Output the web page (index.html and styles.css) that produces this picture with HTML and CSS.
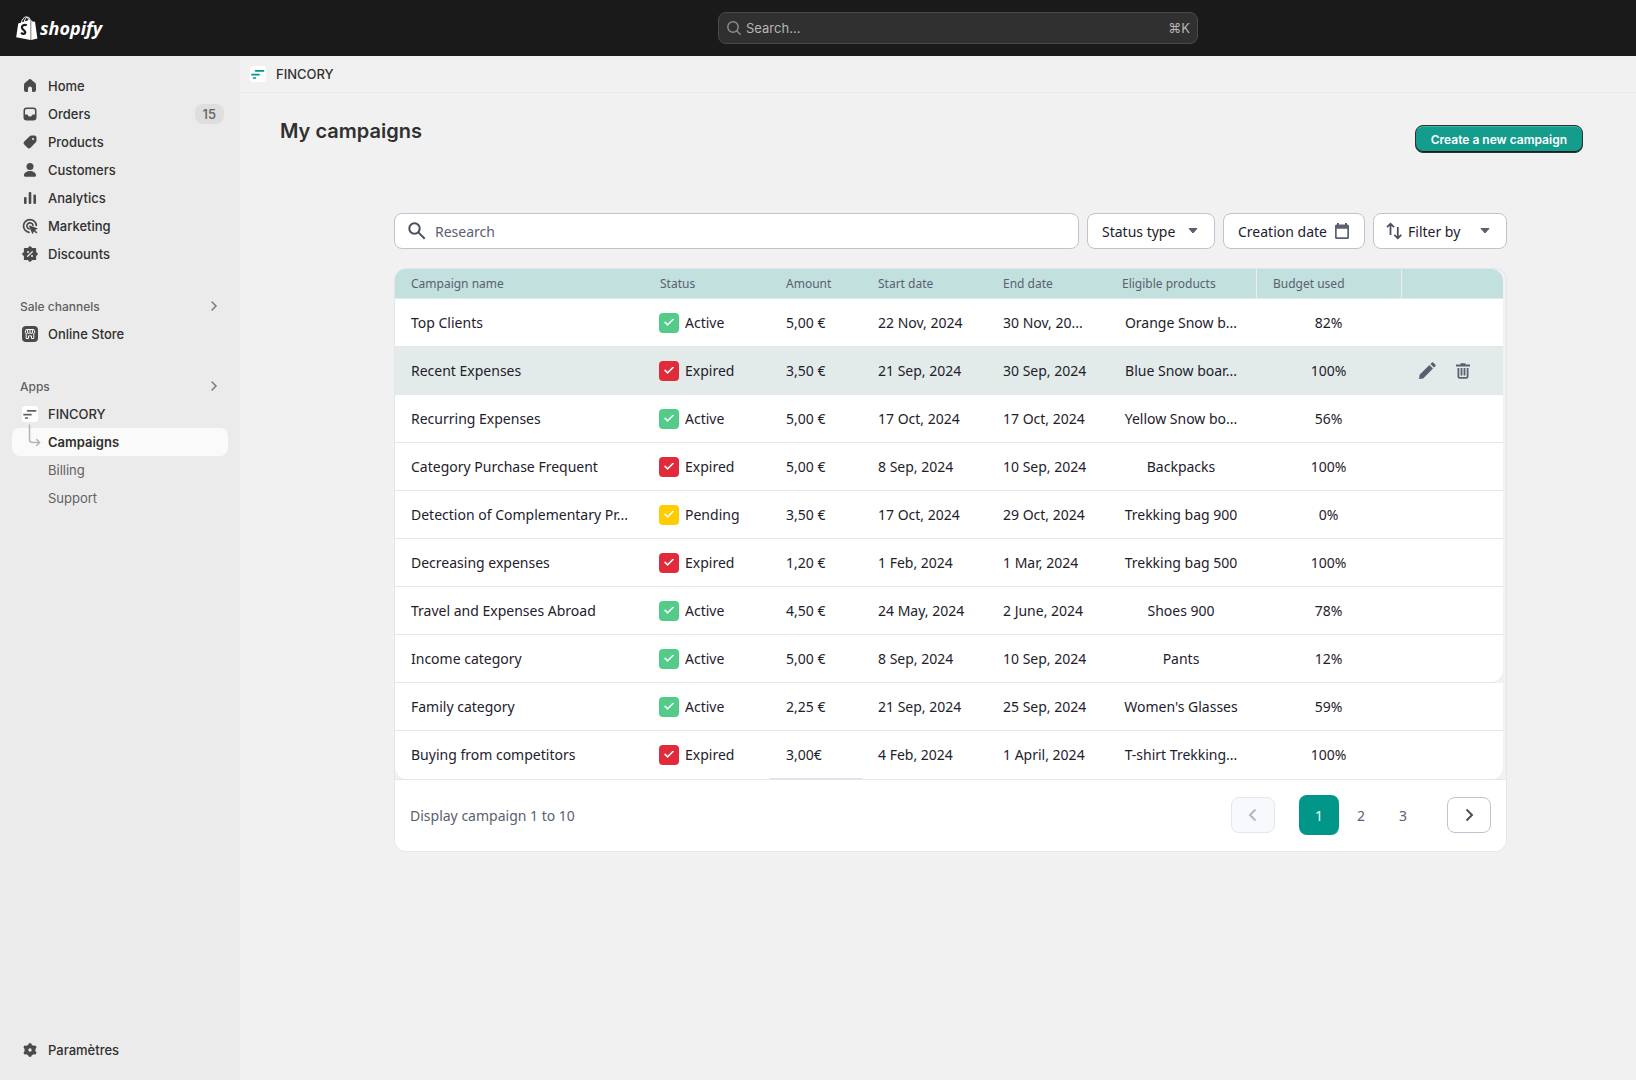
FILE: index.html
```html
<!DOCTYPE html>
<html lang="en">
<head>
    <meta charset="UTF-8">
    <meta name="viewport" content="width=device-width, initial-scale=1">
    <title>My campaigns</title>
    <link rel="stylesheet" href="styles.css">
</head>
<body>
    <header class="topbar">
        <a href="#" class="logo">
            <svg width="22" height="24" viewBox="0 0 22 24">
                <path d="M2.200 7.400 14.600 3.600 14.600 24 .2 21.300z" fill="#fff"/>
                <path d="M15.200 4.100 16.600 5.400 19 5.700 21.400 22.400 15.200 24z" fill="#fff"/>
                <path d="M5.400 7c.5-3.400 2.300-5.800 4.400-6.100 1.600-.2 2.700 1.500 2.900 4.200M8.200 6c.6-3 2-5 3.700-4.900 1.200.1 1.900 1.300 2.200 3.300" fill="none" stroke="#fff" stroke-width="1"/>
                <path d="M10.800 9.300c-2.600-1.200-4.900.1-4.900 2.200 0 2.500 3.600 2.600 3.400 4.900-.1 1.800-2.400 1.900-4.300.4" fill="none" stroke="#1a1a1a" stroke-width="2.200"/>
            </svg>
            <span>shopify</span>
        </a>
        <label class="top-search">
            <svg width="16" height="16" viewBox="0 0 16 16" fill="none" stroke="#8a8a8a" stroke-width="1.500" stroke-linecap="round">
                <circle cx="7" cy="7" r="5.200"/>
                <path d="m11 11 3.200 3.200"/>
            </svg>
            <input type="text" placeholder="Search..." aria-label="Search">
            <kbd>⌘K</kbd>
        </label>
    </header>

    <div class="layout">
        <aside class="sidebar">
            <nav>
                <a href="#" class="item">
                    <svg class="icon" viewBox="0 0 20 20"><path d="M8.300 3.900a2.500 2.500 0 0 1 3.400 0l3.500 3.200c.5.5.8 1.100.8 1.800V14a2 2 0 0 1-2 2h-1.200c-.5 0-.8-.3-.8-.8v-2.700a2 2 0 0 0-4 0v2.700c0 .5-.3.8-.8.8H6a2 2 0 0 1-2-2V8.900c0-.7.3-1.300.8-1.800z"/></svg>
                    Home
                </a>
                <a href="#" class="item">
                    <svg class="icon" viewBox="0 0 20 20"><path fill-rule="evenodd" d="M6.700 3.500h6.600a3.200 3.200 0 0 1 3.200 3.200v6.600a3.200 3.200 0 0 1-3.200 3.200H6.700a3.200 3.200 0 0 1-3.200-3.200V6.700a3.200 3.200 0 0 1 3.200-3.200zM6.750 5C5.780 5 5 5.780 5 6.750v3.750h1.900c.5 0 .9.3 1.100.7l.3.600c.2.400.5.700 1 .7h1.400c.5 0 .8-.3 1-.7l.3-.6c.2-.4.6-.7 1.100-.7H15V6.750C15 5.780 14.220 5 13.250 5z"/></svg>
                    Orders
                    <span class="badge">15</span>
                </a>
                <a href="#" class="item">
                    <svg class="icon" viewBox="0 0 20 20"><path fill-rule="evenodd" d="M11.500 3.500h3a2 2 0 0 1 2 2v3c0 .7-.2 1.300-.7 1.800l-5 5.200a2.500 2.500 0 0 1-3.600 0l-2.700-2.700a2.500 2.500 0 0 1 0-3.600l5.200-5c.5-.5 1.100-.7 1.800-.7zM13 6a1 1 0 1 0 0 2 1 1 0 0 0 0-2z"/></svg>
                    Products
                </a>
                <a href="#" class="item">
                    <svg class="icon" viewBox="0 0 20 20"><circle cx="10" cy="6.500" r="3.500"/><path d="M4 15.200c0-2.500 3-4.200 6-4.200s6 1.700 6 4.200c0 1-.8 1.600-1.600 1.600H5.600c-.8 0-1.600-.6-1.600-1.600z"/></svg>
                    Customers
                </a>
                <a href="#" class="item">
                    <svg class="icon" viewBox="0 0 20 20"><rect x="4" y="9" width="2.600" height="7" rx="1"/><rect x="8.700" y="4" width="2.600" height="12" rx="1"/><rect x="13.400" y="6.500" width="2.600" height="9.500" rx="1"/></svg>
                    Analytics
                </a>
                <a href="#" class="item">
                    <svg class="icon" viewBox="0 0 20 20"><path d="M16.300 9.300A6.400 6.400 0 1 0 9 16.300M13 9.300a3.100 3.100 0 1 0-4 3.600" fill="none" stroke="#4a4a4a" stroke-width="1.700" stroke-linecap="round"/><path d="m9.600 9.400 7.700 2.800c.4.200.4.700 0 .9l-2.300 1 2.400 2.300-1.100 1.100-2.300-2.300-1 2.200c-.2.400-.8.400-.9 0L9 10c-.1-.4.200-.7.600-.6z"/></svg>
                    Marketing
                </a>
                <a href="#" class="item">
                    <svg class="icon" viewBox="0 0 20 20"><path d="M10 2.700 11.900 4.500h3.600v3.600L17.300 10l-1.800 1.900v3.600h-3.600L10 17.300l-1.900-1.800H4.500v-3.600L2.700 10l1.800-1.900V4.500h3.600z" stroke="#4a4a4a" stroke-width="1.200" stroke-linejoin="round"/><path d="m7.700 12.300 4.600-4.600" stroke="#ebebeb" stroke-width="1.300" stroke-linecap="round"/><circle cx="8" cy="8" r="1" fill="#ebebeb"/><circle cx="12" cy="12" r="1" fill="#ebebeb"/></svg>
                    Discounts
                </a>
            </nav>

            <nav>
                <a href="#" class="group">Sale channels
                    <svg width="20" height="20" viewBox="0 0 20 20"><path d="m8 6 4 4-4 4"/></svg>
                </a>
                <a href="#" class="item">
                    <svg class="icon" viewBox="0 0 20 20"><rect x="2" y="2" width="16" height="16" rx="4"/><path d="M6.200 5.500h7.600l1 2.700c0 1.900-2.300 1.900-2.400.2-.2 1.500-2.200 1.500-2.400 0-.2 1.500-2.200 1.500-2.400 0-.1 1.700-2.400 1.700-2.400-.2zM7.600 8.400V5.700M10 8.400V5.700M12.400 8.400V5.700M6.200 10.200v4.300h2.300v-2.600h3v2.600h2.300v-4.300" fill="none" stroke="#fff" stroke-width="1"/></svg>
                    Online Store
                </a>
            </nav>

            <nav>
                <a href="#" class="group">Apps
                    <svg width="20" height="20" viewBox="0 0 20 20"><path d="m8 6 4 4-4 4"/></svg>
                </a>
                <a href="#" class="item">
                    <svg class="icon" viewBox="0 0 20 20"><rect x="2" y="2" width="16" height="16" rx="3.500" fill="#fff"/><path d="M7.600 6.800h8M4 10.700h7M5.600 14h1.800" stroke="#616161" stroke-width="1.700" stroke-linecap="round"/></svg>
                    FINCORY
                </a>
                <a href="#" class="item sub active">
                    <svg class="branch" width="14" height="24" viewBox="0 0 14 24"><path d="M1.500 1v14.500a3 3 0 0 0 3 3H11M8.700 15.500l3 3-3 3" fill="none" stroke="#b5b5b5" stroke-width="1.500" stroke-linecap="round" stroke-linejoin="round"/></svg>
                    Campaigns
                </a>
                <a href="#" class="item sub">Billing</a>
                <a href="#" class="item sub">Support</a>
            </nav>

            <a href="#" class="item settings">
                <svg class="icon" viewBox="0 0 20 20"><circle cx="10" cy="10" r="3.600" fill="none" stroke="#4a4a4a" stroke-width="3.800"/><g stroke="#4a4a4a" stroke-width="3.400" stroke-linecap="round"><path d="M10 5.200v-.4M10 15.200v-.4M14.300 7.500l.4-.2M5.300 12.700l.4-.2M14.300 12.500l.4.2M5.300 7.300l.4.200"/></g></svg>
                Paramètres
            </a>
        </aside>

        <main class="main">
            <div class="appbar">
                <svg width="16" height="16" viewBox="0 0 16 16"><rect width="16" height="16" rx="3.500" fill="#fff"/><path d="M5.600 4.800h8M2 8.700h7M3.600 12h1.800" stroke="#009688" stroke-width="1.700" stroke-linecap="round"/></svg>
                <span>FINCORY</span>
            </div>

            <div class="page-head">
                <h1>My campaigns</h1>
                <button type="button" class="create">Create a new campaign</button>
            </div>

            <section class="content">
                <div class="toolbar">
                    <label class="field search">
                        <svg width="20" height="20" viewBox="0 0 20 20" fill="none" stroke="#4b5060" stroke-width="2"><circle cx="7.500" cy="7.500" r="5.200"/><path d="m11.400 11.400 6.300 6.300"/></svg>
                        <input type="text" placeholder="Research" aria-label="Research">
                    </label>
                    <label class="field status-type">
                        <select aria-label="Status type">
                            <option>Status type</option>
                            <option>Active</option>
                            <option>Expired</option>
                            <option>Pending</option>
                        </select>
                        <svg width="10" height="6" viewBox="0 0 10 6"><path d="M1 .5h8L5 5z" fill="#5b6070" stroke="#5b6070" stroke-linejoin="round"/></svg>
                    </label>
                    <button type="button" class="field creation">
                        Creation date
                        <svg width="16" height="16" viewBox="0 0 16 16"><path fill-rule="evenodd" d="M3 0h2v1.500h6V0h2v1.500h.5A1.500 1.500 0 0 1 15 3v11.500a1.500 1.500 0 0 1-1.500 1.500h-11A1.500 1.500 0 0 1 1 14.500V3a1.500 1.500 0 0 1 1.500-1.500H3zM2.700 5.800v8.500h10.600V5.800z" fill="#5b6070"/></svg>
                    </button>
                    <label class="field filter">
                        <svg width="16" height="18" viewBox="0 0 16 18" fill="none" stroke="#4b5060" stroke-width="1.800"><path d="M4.500 13V2M1 5.200l3.500-3.500L8 5.200M11.800 5v11M8.300 12.800l3.500 3.500 3.500-3.500"/></svg>
                        <select aria-label="Filter by">
                            <option>Filter by</option>
                            <option>Status</option>
                            <option>Budget</option>
                        </select>
                        <svg width="10" height="6" viewBox="0 0 10 6"><path d="M1 .5h8L5 5z" fill="#5b6070" stroke="#5b6070" stroke-linejoin="round"/></svg>
                    </label>
                </div>

                <div class="card">
                    <table class="campaigns">
                        <colgroup>
                            <col class="c-name">
                            <col class="c-status">
                            <col class="c-amount">
                            <col class="c-start">
                            <col class="c-end">
                            <col class="c-products">
                            <col class="c-budget">
                            <col class="c-actions">
                        </colgroup>
                        <thead>
                            <tr>
                                <th>Campaign name</th>
                                <th>Status</th>
                                <th>Amount</th>
                                <th>Start date</th>
                                <th>End date</th>
                                <th>Eligible products</th>
                                <th>Budget used</th>
                                <th></th>
                            </tr>
                        </thead>
                        <tbody>
                            <tr>
                                <td>Top Clients</td>
                                <td><label class="state active"><input type="checkbox" checked>Active</label></td>
                                <td>5,00 €</td>
                                <td>22 Nov, 2024</td>
                                <td>30 Nov, 20...</td>
                                <td>Orange Snow b...</td>
                                <td>82%</td>
                                <td></td>
                            </tr>
                            <tr class="selected">
                                <td>Recent Expenses</td>
                                <td><label class="state expired"><input type="checkbox" checked>Expired</label></td>
                                <td>3,50 €</td>
                                <td>21 Sep, 2024</td>
                                <td>30 Sep, 2024</td>
                                <td>Blue Snow boar...</td>
                                <td>100%</td>
                                <td>
                                    <div class="actions">
                                        <button type="button" aria-label="Edit">
                                            <svg width="20" height="20" viewBox="0 0 20 20" fill="#5b6070"><path d="m2 18 .6-4.200L12.400 4l3.600 3.600-9.800 9.800zM13.400 3l1.300-1.300c.5-.5 1.200-.5 1.700 0l1.900 1.900c.5.500.5 1.200 0 1.700L17 6.600z"/></svg>
                                        </button>
                                        <button type="button" aria-label="Delete">
                                            <svg width="20" height="20" viewBox="0 0 20 20" fill="none" stroke="#5b6070" stroke-width="1.800"><path d="M3 4.500h14M7.500 3.200h5M5.400 7v8.500c0 .8.500 1.300 1.300 1.300h6.600c.8 0 1.300-.5 1.300-1.300V7M8.500 7v7.500M11.500 7v7.500"/></svg>
                                        </button>
                                    </div>
                                </td>
                            </tr>
                            <tr>
                                <td>Recurring Expenses</td>
                                <td><label class="state active"><input type="checkbox" checked>Active</label></td>
                                <td>5,00 €</td>
                                <td>17 Oct, 2024</td>
                                <td>17 Oct, 2024</td>
                                <td>Yellow Snow bo...</td>
                                <td>56%</td>
                                <td></td>
                            </tr>
                            <tr>
                                <td>Category Purchase Frequent</td>
                                <td><label class="state expired"><input type="checkbox" checked>Expired</label></td>
                                <td>5,00 €</td>
                                <td>8 Sep, 2024</td>
                                <td>10 Sep, 2024</td>
                                <td>Backpacks</td>
                                <td>100%</td>
                                <td></td>
                            </tr>
                            <tr>
                                <td>Detection of Complementary Pr...</td>
                                <td><label class="state pending"><input type="checkbox" checked>Pending</label></td>
                                <td>3,50 €</td>
                                <td>17 Oct, 2024</td>
                                <td>29 Oct, 2024</td>
                                <td>Trekking bag 900</td>
                                <td>0%</td>
                                <td></td>
                            </tr>
                            <tr>
                                <td>Decreasing expenses</td>
                                <td><label class="state expired"><input type="checkbox" checked>Expired</label></td>
                                <td>1,20 €</td>
                                <td>1 Feb, 2024</td>
                                <td>1 Mar, 2024</td>
                                <td>Trekking bag 500</td>
                                <td>100%</td>
                                <td></td>
                            </tr>
                            <tr>
                                <td>Travel and Expenses Abroad</td>
                                <td><label class="state active"><input type="checkbox" checked>Active</label></td>
                                <td>4,50 €</td>
                                <td>24 May, 2024</td>
                                <td>2 June, 2024</td>
                                <td>Shoes 900</td>
                                <td>78%</td>
                                <td></td>
                            </tr>
                            <tr class="rounded">
                                <td>Income category</td>
                                <td><label class="state active"><input type="checkbox" checked>Active</label></td>
                                <td>5,00 €</td>
                                <td>8 Sep, 2024</td>
                                <td>10 Sep, 2024</td>
                                <td>Pants</td>
                                <td>12%</td>
                                <td></td>
                            </tr>
                            <tr>
                                <td>Family category</td>
                                <td><label class="state active"><input type="checkbox" checked>Active</label></td>
                                <td>2,25 €</td>
                                <td>21 Sep, 2024</td>
                                <td>25 Sep, 2024</td>
                                <td>Women's Glasses</td>
                                <td>59%</td>
                                <td></td>
                            </tr>
                            <tr>
                                <td>Buying from competitors</td>
                                <td><label class="state expired"><input type="checkbox" checked>Expired</label></td>
                                <td>3,00€</td>
                                <td>4 Feb, 2024</td>
                                <td>1 April, 2024</td>
                                <td>T-shirt Trekking...</td>
                                <td>100%</td>
                                <td></td>
                            </tr>
                        </tbody>
                    </table>

                    <div class="card-foot">
                        <p>Display campaign 1 to 10</p>
                        <div class="pager">
                            <button type="button" class="arrow" aria-label="Previous" disabled>
                                <svg width="20" height="20" viewBox="0 0 20 20"><path d="m12.500 4.500-5.500 5.500 5.500 5.500"/></svg>
                            </button>
                            <div class="pages">
                                <button type="button" class="current">1</button>
                                <button type="button">2</button>
                                <button type="button">3</button>
                            </div>
                            <button type="button" class="arrow" aria-label="Next">
                                <svg width="20" height="20" viewBox="0 0 20 20"><path d="m7.500 4.500 5.500 5.500-5.500 5.500"/></svg>
                            </button>
                        </div>
                    </div>
                </div>
            </section>
        </main>
    </div>
</body>
</html>
```

FILE: styles.css
```css
*{
    margin: 0;
    padding: 0;
    box-sizing: border-box;
}
body{
    min-height: 100vh;
    display: flex;
    flex-direction: column;
    background: #f1f1f1;
    color: #303030;
    font-family: Inter, sans-serif;
    font-size: 13px;
}
a{
    color: inherit;
    text-decoration: none;
}
button, input, select{
    font: inherit;
    color: inherit;
}
button{
    cursor: pointer;
}
svg{
    flex: none;
}

/* top bar */
.topbar{
    height: 56px;
    display: grid;
    grid-template-columns: 718fr 480px 438fr;
    align-items: center;
    background: #1a1a1a;
}
.logo{
    display: flex;
    align-items: center;
    gap: 2px;
    padding-left: 16px;
    color: #fff;
    font-family: "Open Sans", sans-serif;
    font-size: 18px;
    font-weight: 700;
    font-style: italic;
    line-height: 24px;
}
.top-search{
    height: 32px;
    display: flex;
    align-items: center;
    gap: 4px;
    padding: 0 7px;
    background: #303030;
    border: 1px solid #4a4a4a;
    border-radius: 8px;
    color: #b5b5b5;
}
.top-search input{
    flex: 1;
    min-width: 0;
    background: none;
    border: none;
    outline: none;
}
.top-search input::placeholder{
    color: #b5b5b5;
}
.top-search kbd{
    font-family: Inter, "DejaVu Sans", sans-serif;
}

/* sidebar */
.layout{
    flex: 1;
    display: flex;
}
.sidebar{
    flex: none;
    width: 240px;
    display: flex;
    flex-direction: column;
    gap: 24px;
    padding: 16px 12px;
    background: #ebebeb;
}
.item{
    position: relative;
    height: 28px;
    display: flex;
    align-items: center;
    gap: 8px;
    padding: 0 4px 0 8px;
    border-radius: 8px;
    font-weight: 500;
}
.icon{
    width: 20px;
    height: 20px;
    fill: #4a4a4a;
}
.badge{
    margin-left: auto;
    padding: 0 8px;
    border-radius: 8px;
    background: #dedede;
    color: #616161;
    line-height: 20px;
}
.group{
    height: 28px;
    display: flex;
    align-items: center;
    justify-content: space-between;
    padding: 0 4px 0 8px;
    color: #616161;
    font-size: 12px;
    font-weight: 500;
}
.group svg{
    fill: none;
    stroke: #7a7a7a;
    stroke-width: 1.5;
    stroke-linecap: round;
}
.sub{
    padding-left: 36px;
    color: #616161;
    font-weight: 400;
}
.sub.active{
    background: #fafafa;
    color: #303030;
    font-weight: 600;
}
.branch{
    position: absolute;
    left: 16px;
    top: -4px;
}
.settings{
    margin-top: auto;
}

/* main column */
.main{
    flex: 1;
    min-width: 0;
}
.appbar{
    height: 37px;
    display: flex;
    align-items: center;
    gap: 10px;
    padding-left: 10px;
    border-bottom: 1px solid #ebebeb;
    font-weight: 500;
}
.page-head{
    display: flex;
    align-items: flex-end;
    justify-content: space-between;
    padding: 24px 53px 60px 40px;
}
.page-head h1{
    padding-bottom: 8px;
    font-size: 20px;
    font-weight: 600;
    line-height: 28px;
}
.create{
    height: 28px;
    padding: 0 15px;
    background: #149c8d;
    border: 1px solid #303030;
    border-radius: 8px;
    box-shadow: inset 0 -1px 0 #16201f, inset 0 1px 0 #47b3a7;
    color: #fff;
    font-size: 12px;
    font-weight: 600;
}
.content{
    padding: 0 129px 48px 154px;
    color: #1e212c;
    font-family: "Noto Sans", sans-serif;
    font-size: 14px;
}
.toolbar{
    display: flex;
    gap: 8px;
    margin-bottom: 19px;
}
.field{
    height: 36px;
    display: flex;
    align-items: center;
    justify-content: space-between;
    padding: 0 16px 0 14px;
    background: #fff;
    border: 1px solid #bfc3d1;
    border-radius: 8px;
}
.field input, .field select{
    min-width: 0;
    appearance: none;
    background: none;
    border: none;
    outline: none;
}
.search{
    flex: 1;
    gap: 8px;
    padding-left: 12px;
}
.search input{
    flex: 1;
}
.search input::placeholder{
    color: #5b6070;
}
.status-type{
    width: 128px;
}
.creation{
    width: 142px;
    padding-right: 14px;
}
.filter{
    width: 134px;
    gap: 6px;
    padding-left: 12px;
}
.filter select{
    flex: 1;
}

/* campaigns table */
.card{
    border: 1px solid #e1e6ef;
    border-radius: 12px;
    overflow: hidden;
}
.campaigns{
    width: calc(100% - 3px);
    table-layout: fixed;
    border-collapse: separate;
    border-spacing: 0;
}
.c-name{ width: 249px; }
.c-status{ width: 126px; }
.c-amount{ width: 92px; }
.c-start{ width: 125px; }
.c-end{ width: 119px; }
.c-products{ width: 150px; }
.c-budget{ width: 145px; }
.c-actions{ width: 102px; }
.campaigns th{
    height: 30px;
    padding: 0 16px;
    background: #c2e0dd;
    border-bottom: 1px solid #e1e6ef;
    color: #5b6070;
    font-size: 12px;
    font-weight: 400;
    text-align: left;
    white-space: nowrap;
}
.campaigns th:nth-child(n+7){
    border-left: 1px solid #e8eef2;
}
.campaigns th:last-child{
    border-top-right-radius: 12px;
}
.campaigns td{
    height: 48px;
    padding: 0 16px;
    background: #fff;
    border-bottom: 1px solid #e1e6ef;
    white-space: nowrap;
}
.campaigns td:nth-child(2){
    padding-left: 15px;
}
.campaigns td:nth-child(6), .campaigns td:nth-child(7){
    padding: 0;
    text-align: center;
}
.campaigns .selected td{
    background: #e3ebea;
}
.campaigns .rounded td:last-child{
    border-bottom-right-radius: 12px;
}
.campaigns tr:last-child td{
    border-bottom-color: #fff;
}
.campaigns tr:last-child td:nth-child(3){
    border-bottom-color: #dfe2ee;
}
.campaigns tr:last-child td:first-child{
    border-bottom-left-radius: 12px;
}
.campaigns tr:last-child td:last-child{
    border-bottom-right-radius: 12px;
}
.campaigns thead tr:last-child th{
    border-bottom-color: #e1e6ef;
}
.state{
    display: flex;
    align-items: center;
    gap: 6px;
}
.state input{
    appearance: none;
    width: 20px;
    height: 20px;
    display: grid;
    place-items: center;
    border-radius: 4px;
}
.state input:checked::before{
    content: "";
    width: 10px;
    height: 8px;
    background: #fff;
    clip-path: polygon(0 50%, 12% 35%, 36% 65%, 88% 0, 100% 14%, 36% 95%);
}
.state.active input{ background: #52cc88; }
.state.expired input{ background: #e02b3a; }
.state.pending input{ background: #ffcc00; }
.actions{
    display: flex;
    gap: 16px;
}
.actions button{
    display: flex;
    background: none;
    border: none;
}

/* footer with pagination */
.card-foot{
    display: flex;
    align-items: center;
    justify-content: space-between;
    padding: 15px 15px 16px;
    background: #fff;
    border-top: 1px solid #e1e6ef;
    color: #5b6070;
}
.pager{
    display: flex;
    align-items: center;
    gap: 24px;
}
.pages{
    display: flex;
    gap: 2px;
}
.pages button{
    width: 40px;
    height: 40px;
    background: none;
    border: none;
    border-radius: 8px;
}
.pages .current{
    background: #009688;
    color: #fff;
}
.arrow{
    width: 44px;
    height: 36px;
    display: flex;
    align-items: center;
    justify-content: center;
    background: #fff;
    border: 1px solid #bfc3d1;
    border-radius: 8px;
}
.arrow svg{
    fill: none;
    stroke: #4b5060;
    stroke-width: 2;
}
.arrow:disabled{
    background: #f8f9fd;
    border-color: #e1e6ef;
}
.arrow:disabled svg{
    stroke: #b3b8c6;
}
```
